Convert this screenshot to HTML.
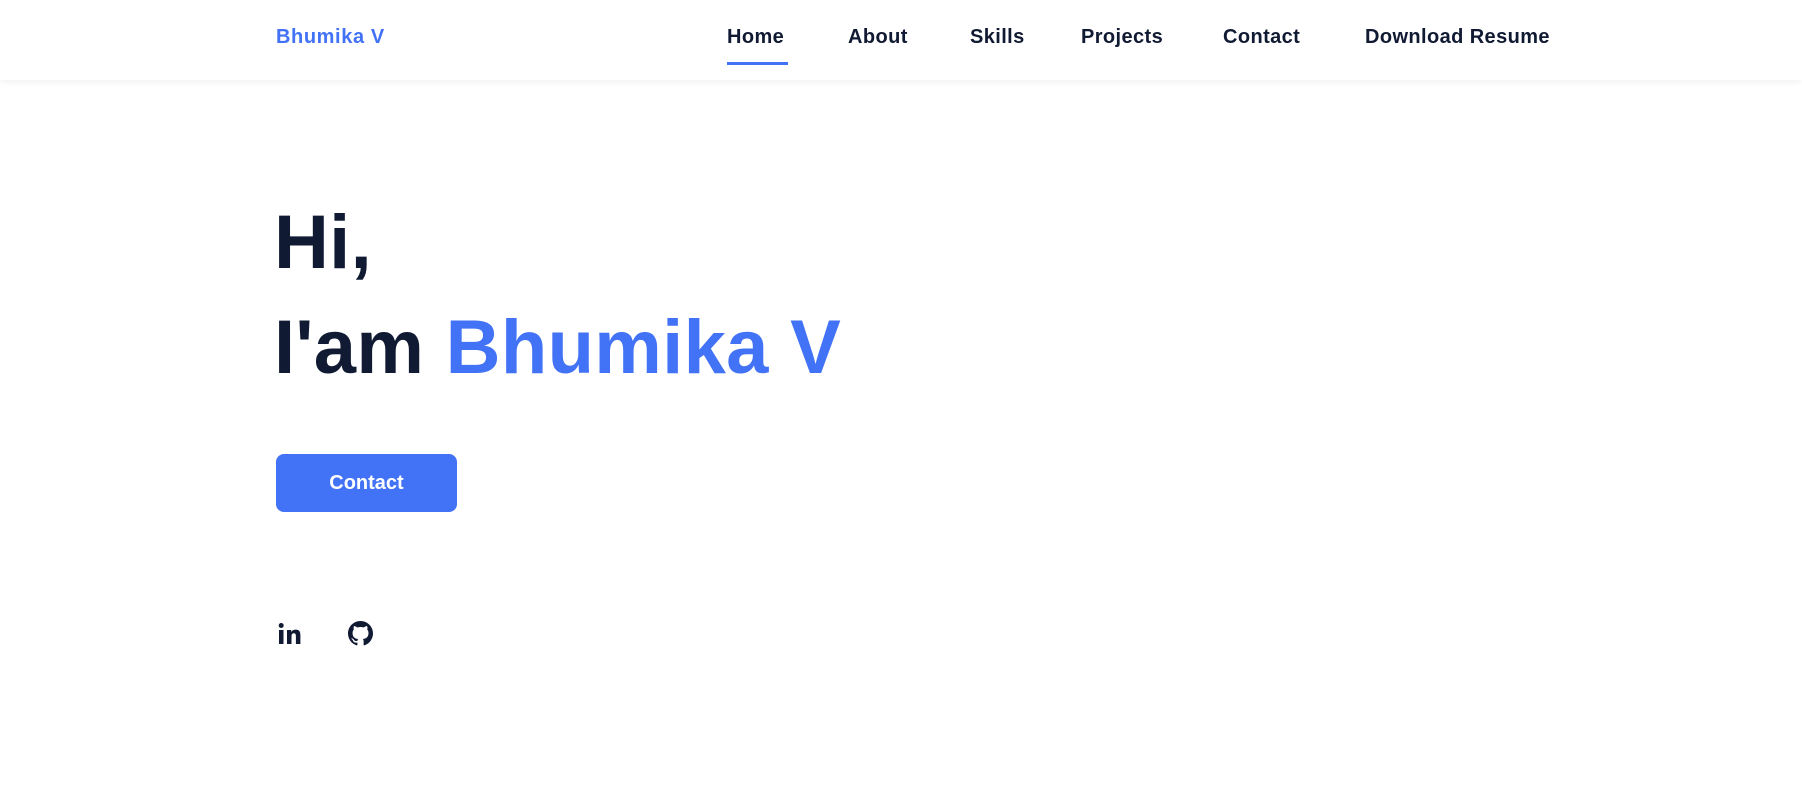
<!DOCTYPE html>
<html><head><style>
*{margin:0;padding:0;box-sizing:border-box}
body{width:1802px;height:788px;background:#fff;font-family:"Liberation Sans",sans-serif;color:#111a33;position:relative;overflow:hidden}
.nav{position:absolute;left:0;top:0;width:1802px;height:80px;background:#fff;box-shadow:0 2px 6px rgba(0,0,0,0.06)}
.logo{position:absolute;left:276px;top:26px;font-size:20px;font-weight:700;color:#4272f5;letter-spacing:0.6px}
.nav a{position:absolute;top:26px;font-size:20px;font-weight:700;color:#111a33;text-decoration:none;white-space:nowrap;letter-spacing:0.4px}
.ul{position:absolute;left:727px;top:62px;width:61px;height:3px;background:#4272f5}
h1{position:absolute;left:274px;font-size:76px;font-weight:700;color:#111a33;line-height:1;white-space:nowrap;letter-spacing:0.3px}
.b{color:#4272f5}
.btn{position:absolute;left:276px;top:454px;width:181px;height:58px;background:#4272f5;border-radius:8px;color:#fff;font-size:20px;font-weight:700;text-align:center;line-height:58px}
</style></head><body>
<div class="nav">
<div class="logo">Bhumika V</div>
<a style="left:727px">Home</a>
<a style="left:848px">About</a>
<a style="left:970px">Skills</a>
<a style="left:1081px">Projects</a>
<a style="left:1223px">Contact</a>
<a style="left:1365px">Download Resume</a>
<div class="ul"></div>
</div>
<h1 style="top:205px">Hi,</h1>
<h1 style="top:310px">I'am <span class="b">Bhumika V</span></h1>
<div class="btn">Contact</div>
<svg style="position:absolute;left:278px;top:622px" width="24" height="24" viewBox="0 0 24 24"><rect x="1" y="8" width="4.5" height="14" fill="#111a33"/><circle cx="3.2" cy="3.5" r="2.5" fill="#111a33"/><path d="M9 8h4.2v2c.8-1.4 2.4-2.4 4.6-2.4 3.6 0 4.6 2.3 4.6 5.6V22h-4.5v-8c0-1.7-.5-2.8-2-2.8-1.7 0-2.4 1.3-2.4 3V22H9z" fill="#111a33"/></svg>
<svg style="position:absolute;left:348px;top:621px" width="25" height="25" viewBox="0 0 16 16"><path fill="#111a33" d="M8 0C3.580 0 0 3.58 0 8c0 3.540 2.290 6.530 5.470 7.590.4.07.55-.17.55-.38 0-.19-.01-.82-.01-1.49-2.010.37-2.530-.49-2.690-.94-.09-.23-.48-.94-.82-1.130-.28-.15-.68-.52-.01-.53.63-.01 1.080.58 1.230.82.72 1.210 1.870.87 2.330.66.07-.52.28-.87.51-1.070-1.780-.2-3.640-.89-3.640-3.950 0-.87.31-1.590.82-2.150-.08-.2-.36-1.020.08-2.120 0 0 .67-.21 2.200.82.64-.18 1.320-.27 2-.27.68 0 1.360.09 2 .27 1.530-1.040 2.200-.82 2.200-.82.44 1.100.16 1.920.08 2.120.51.56.82 1.270.82 2.150 0 3.070-1.870 3.750-3.650 3.950.29.25.54.73.54 1.480 0 1.070-.01 1.930-.01 2.200 0 .21.15.46.55.38A8.013 8.013 0 0016 8c0-4.420-3.580-8-8-8z"/></svg>
</body></html>
